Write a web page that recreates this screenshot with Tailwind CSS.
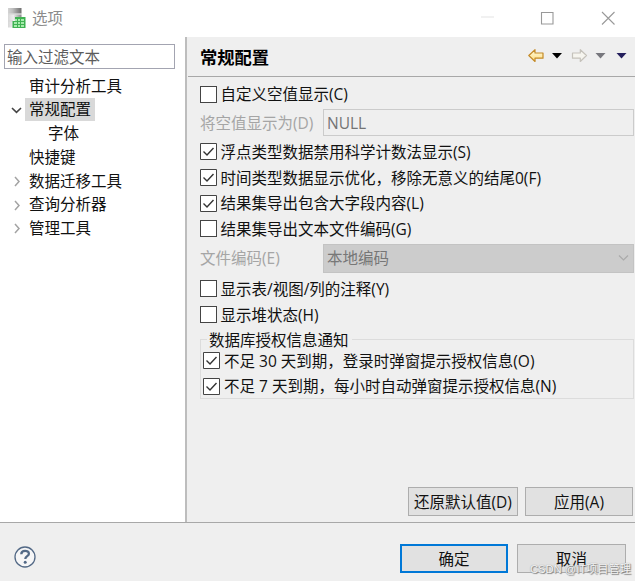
<!DOCTYPE html>
<html lang="zh-CN">
<head>
<meta charset="utf-8">
<title>选项</title>
<script src="https://cdn.jsdelivr.net/npm/@tailwindcss/browser@4"></script>
</head>
<body class="bg-[#efefef] overflow-hidden">
<div class="relative w-[635px] h-[581px] flex flex-col overflow-hidden bg-[#efefef] text-[15.5px] leading-[20px] text-[#111] whitespace-nowrap font-['Open_Sans','Noto_Sans_CJK_SC',sans-serif]">
  <header class="h-[37px] shrink-0 bg-white flex items-center pl-[7px] pb-[2px]">
    <svg class="w-[19px] h-[22px]" viewBox="0 0 19 22">
      <defs>
        <linearGradient id="top"><stop offset="0" stop-color="#d4d4d4"/><stop offset=".35" stop-color="#bdbdbd"/><stop offset="1" stop-color="#6e6e6e"/></linearGradient>
        <linearGradient id="srv"><stop offset="0" stop-color="#d8d8d8"/><stop offset=".4" stop-color="#ececec"/><stop offset="1" stop-color="#8a8a8a"/></linearGradient>
      </defs>
      <path d="M1 1h13.500v5.500H1z" fill="url(#top)"/>
      <path d="M1 7.500h13.500v6H1zM1 14.500h11v6H1z" fill="url(#srv)"/>
      <path d="M1 7h13.500M1 14h5" stroke="#bbb" stroke-width=".8"/>
      <path d="M8 10h10.500v11H5.500v-7H8z" fill="#3fb252"/>
      <path d="M8 12h2v2H8zm3 0h2v2h-2zm3 0h3v2h-3zM7 15h3v2H7zm4 0h2v2h-2zm3 0h3v2h-3zM7 18h3v2H7zm4 0h2v2h-2zm3 0h3v2h-3z" fill="#a5ebab"/>
    </svg>
    <span class="ml-[6px] text-[#8c8c8c]">选项</span>
    <svg class="ml-auto mr-[19px] w-[136px] h-[16px]" viewBox="0 0 136 16" fill="none" stroke="#999" stroke-width="1.100">
      <path d="M1 7h13" stroke="#ececec" stroke-width="1.500"/>
      <path d="M61.500 2.500h11.500v11.500H61.500z"/>
      <path d="M122 2l12.500 12.500M134.500 2L122 14.500"/>
    </svg>
  </header>
  <div class="h-[485px] shrink-0 flex">
    <aside class="w-[187px] shrink-0 bg-white border-r-2 border-[#bdbdbd] pt-[7px]">
      <div class="ml-[4px] w-[171px] h-[25px] border border-[#a3a4b1] pl-[2px] leading-[24px] text-[#5c5c5c]">输入过滤文本</div>
      <nav class="mt-[5px]">
        <div class="h-[23.7px] flex items-center pl-[29px]">审计分析工具</div>
        <div class="h-[23.7px] flex items-center pl-[11px]">
          <svg class="w-[11px] h-[8px]" viewBox="0 0 11 8" fill="none" stroke="#444" stroke-width="1.600"><path d="M1 2l4.500 4.300L10 2"/></svg>
          <span class="ml-[3px] h-[23px] w-[70px] bg-[#d9d9d9] pl-[4px] leading-[23px]">常规配置</span>
        </div>
        <div class="h-[23.7px] flex items-center pl-[48px]">字体</div>
        <div class="h-[23.7px] flex items-center pl-[29px]">快捷键</div>
        <div class="h-[23.7px] flex items-center pl-[13px]"><svg class="w-[8px] h-[11px] mr-[8px] translate-y-[1px]" viewBox="0 0 8 11" fill="none" stroke="#a3a3a3" stroke-width="1.500"><path d="M2 1l4 4.500L2 10"/></svg>数据迁移工具</div>
        <div class="h-[23.7px] flex items-center pl-[13px]"><svg class="w-[8px] h-[11px] mr-[8px] translate-y-[1px]" viewBox="0 0 8 11" fill="none" stroke="#a3a3a3" stroke-width="1.500"><path d="M2 1l4 4.500L2 10"/></svg>查询分析器</div>
        <div class="h-[23.7px] flex items-center pl-[13px]"><svg class="w-[8px] h-[11px] mr-[8px] translate-y-[1px]" viewBox="0 0 8 11" fill="none" stroke="#a3a3a3" stroke-width="1.500"><path d="M2 1l4 4.500L2 10"/></svg>管理工具</div>
      </nav>
    </aside>
    <main class="flex-1 flex flex-col pl-px">
      <div class="h-[40px] shrink-0 border-b border-[#a8a8a8] flex items-center pl-[12px]">
        <h1 class="text-[17.3px] font-bold text-black translate-y-px">常规配置</h1>
        <svg class="ml-auto mr-[7px] w-[100px] h-[16px] -translate-y-px" viewBox="0 0 100 16">
          <defs><linearGradient id="gold" x2="0" y2="1"><stop stop-color="#fffce0"/><stop offset="1" stop-color="#ffdc7c"/></linearGradient></defs>
          <path d="M.8 7.500L7 1.700V5h8v5.200H7v3.300z" fill="url(#gold)" stroke="#c48a27" stroke-width="1.200" stroke-linejoin="round"/>
          <path d="M24 5h10l-5 5.500z" fill="#000"/>
          <path d="M58.500 7.500L52.300 1.700V5h-7.800v5.200h7.800v3.300z" fill="#f6f5ef" stroke="#c5c2bb" stroke-width="1.200" stroke-linejoin="round"/>
          <path d="M67.500 5h10l-5 5.500z" fill="#77777d"/>
          <path d="M88.500 5h10l-5 5.500z" fill="#241f5c"/>
        </svg>
      </div>
      <div class="pl-[12px] pt-[4px]">
        <div class="h-[26px] flex items-center"><i class="w-[17px] h-[17px] bg-white border border-[#444] mr-[3.500px]"></i>自定义空值显示(C)</div>
        <div class="mt-[2px] h-[27px] flex items-center text-[#a5a5a5]"><span class="w-[123px] shrink-0">将空值显示为(D)</span><span class="w-[311px] h-[27px] border border-[#cbcbcb] pl-[3px] leading-[26px] text-[#747474]">NULL</span></div>
        <div class="mt-[3px] h-[25.7px] flex items-center"><svg class="w-[17px] h-[17px] mr-[3.500px]" viewBox="0 0 17 17"><path d="M.5.5h16v16H.5z" fill="#fff" stroke="#444"/><path d="M3.500 8.500l3.500 3.500 6.500-7" fill="none" stroke="#333" stroke-width="1.400"/></svg>浮点类型数据禁用科学计数法显示(S)</div>
        <div class="h-[25.7px] flex items-center"><svg class="w-[17px] h-[17px] mr-[3.500px]" viewBox="0 0 17 17"><path d="M.5.5h16v16H.5z" fill="#fff" stroke="#444"/><path d="M3.500 8.500l3.500 3.500 6.500-7" fill="none" stroke="#333" stroke-width="1.400"/></svg>时间类型数据显示优化，移除无意义的结尾0(F)</div>
        <div class="h-[25.7px] flex items-center"><svg class="w-[17px] h-[17px] mr-[3.500px]" viewBox="0 0 17 17"><path d="M.5.5h16v16H.5z" fill="#fff" stroke="#444"/><path d="M3.500 8.500l3.500 3.500 6.500-7" fill="none" stroke="#333" stroke-width="1.400"/></svg>结果集导出包含大字段内容(L)</div>
        <div class="h-[25.7px] flex items-center"><i class="w-[17px] h-[17px] bg-white border border-[#444] mr-[3.500px]"></i>结果集导出文本文件编码(G)</div>
        <div class="mt-[2.200px] h-[29px] flex items-center text-[#a5a5a5]"><span class="w-[123px] shrink-0">文件编码(E)</span><span class="w-[311px] h-[29px] border border-[#c3c3c3] bg-[#cccccc] pl-[3px] pr-[4px] flex items-center justify-between text-[#777]">本地编码<svg class="w-[11px] h-[8px]" viewBox="0 0 11 8" fill="none" stroke="#aaa" stroke-width="1.200"><path d="M1 1.500l4.500 4.500L10 1.500"/></svg></span></div>
        <div class="mt-[3px] h-[26px] flex items-center"><i class="w-[17px] h-[17px] bg-white border border-[#444] mr-[3.500px]"></i>显示表/视图/列的注释(Y)</div>
        <div class="h-[26px] flex items-center"><i class="w-[17px] h-[17px] bg-white border border-[#444] mr-[3.500px]"></i>显示堆状态(H)</div>
        <fieldset class="mt-[2px] w-[434px] h-[69px] border border-[#dcdcdc] pl-[2px]">
          <legend class="ml-[4px] pl-[2px] pr-[3px] h-[20px] leading-[20px]">数据库授权信息通知</legend>
          <div class="h-[25.500px] -mt-[2px] flex items-center"><svg class="w-[17px] h-[17px] mr-[4px]" viewBox="0 0 17 17"><path d="M.5.5h16v16H.5z" fill="#fff" stroke="#444"/><path d="M3.500 8.500l3.500 3.500 6.500-7" fill="none" stroke="#333" stroke-width="1.400"/></svg>不足 30 天到期，登录时弹窗提示授权信息(O)</div>
          <div class="h-[25.500px] flex items-center"><svg class="w-[17px] h-[17px] mr-[4px]" viewBox="0 0 17 17"><path d="M.5.5h16v16H.5z" fill="#fff" stroke="#444"/><path d="M3.500 8.500l3.500 3.500 6.500-7" fill="none" stroke="#333" stroke-width="1.400"/></svg>不足 7 天到期，每小时自动弹窗提示授权信息(N)</div>
        </fieldset>
      </div>
      <div class="mt-auto mb-[6px] mr-[2px] flex justify-end gap-[7px]">
        <button class="w-[110px] h-[29px] bg-[#e1e1e1] border border-[#adadad]">还原默认值(D)</button>
        <button class="w-[108px] h-[29px] bg-[#e1e1e1] border border-[#adadad]">应用(A)</button>
      </div>
    </main>
  </div>
  <footer class="flex-1 border-t border-[#a8a8a8] flex items-start pl-[14px] pr-[9px] pt-[21px]">
    <svg class="mt-[2px] w-[22px] h-[22px]" viewBox="0 0 22 22" fill="none" stroke="#536986">
      <circle cx="11" cy="11" r="10" stroke-width="1.300" fill="#f6f6f7"/>
      <path d="M7.300 8.200c0-4.500 7.600-4.300 7.600-.5 0 2.400-3.600 2.500-3.600 5.300" stroke-width="2.300"/>
      <circle cx="11.200" cy="16.300" r="1.500" fill="#536986" stroke="none"/>
    </svg>
    <button class="ml-auto w-[108px] h-[29px] bg-[#e1e1e1] border-2 border-[#0078d7]">确定</button>
    <button class="ml-[9px] w-[109px] h-[29px] bg-[#e1e1e1] border border-[#adadad]">取消</button>
  </footer>
  <div class="absolute left-[530px] top-[561px] text-[11.200px] leading-[17px] text-[#f4f4f4] [text-shadow:1px_1px_1px_#808080,0_0_1px_#888] font-['Liberation_Sans','Noto_Sans_CJK_SC',sans-serif]">CSDN @IT项目管理</div>
</div>
</body>
</html>
